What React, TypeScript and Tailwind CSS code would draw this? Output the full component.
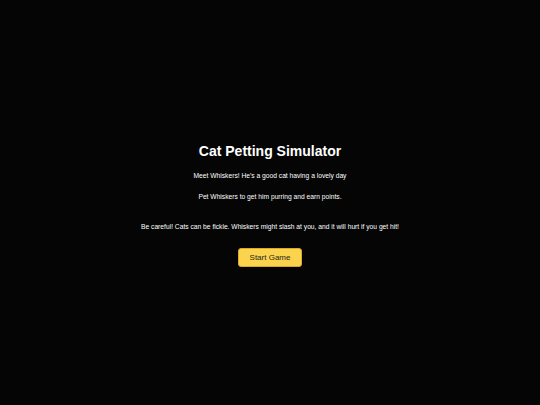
export default function App() {
  return (
    <div
      className="min-h-[405px] w-full bg-[#050505] text-white flex flex-col items-center justify-center pt-[5px]"
      style={{ fontFamily: '"Liberation Sans", Arial, sans-serif' }}
    >
      {/* TITLE */}
      <h1 className="text-[14px] leading-[16px] font-bold">Cat Petting Simulator</h1>

      {/* INTRO */}
      <p className="mt-[12px] text-[6.7px] leading-[9px]">Meet Whiskers! He's a good cat having a lovely day</p>
      <p className="mt-[12px] text-[6.7px] leading-[9px]">Pet Whiskers to get him purring and earn points.</p>
      <p className="mt-[21px] text-[6.7px] leading-[9px]">
        Be careful! Cats can be fickle. Whiskers might slash at you, and it will hurt if you get hit!
      </p>

      {/* START */}
      <button className="mt-[17px] h-[19px] px-[11px] rounded-[3px] bg-[#fcd34d] border border-[#d9a92a] text-[#1f1f1f] text-[8px] leading-none">
        Start Game
      </button>
    </div>
  );
}
